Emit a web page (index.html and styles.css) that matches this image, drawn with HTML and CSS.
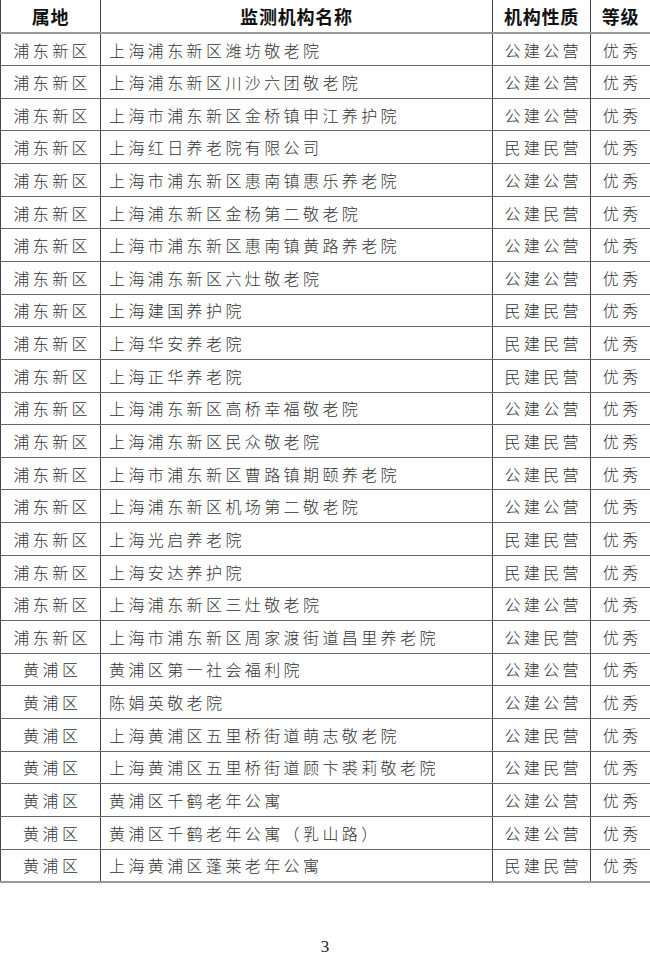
FILE: index.html
```html
<!DOCTYPE html>
<html lang="zh-CN">
<head>
<meta charset="utf-8">
<title>监测机构</title>
<link rel="stylesheet" href="styles.css">
</head>
<body>
<table class="list">
<colgroup><col class="c1"><col class="c2"><col class="c3"><col class="c4"></colgroup>
<thead>
<tr><th>属地</th><th>监测机构名称</th><th>机构性质</th><th>等级</th></tr>
</thead>
<tbody>
<tr><td class="ctr">浦东新区</td><td class="name">上海浦东新区潍坊敬老院</td><td class="ctr">公建公营</td><td class="ctr">优秀</td></tr>
<tr><td class="ctr">浦东新区</td><td class="name">上海浦东新区川沙六团敬老院</td><td class="ctr">公建公营</td><td class="ctr">优秀</td></tr>
<tr><td class="ctr">浦东新区</td><td class="name">上海市浦东新区金桥镇申江养护院</td><td class="ctr">公建公营</td><td class="ctr">优秀</td></tr>
<tr><td class="ctr">浦东新区</td><td class="name">上海红日养老院有限公司</td><td class="ctr">民建民营</td><td class="ctr">优秀</td></tr>
<tr><td class="ctr">浦东新区</td><td class="name">上海市浦东新区惠南镇惠乐养老院</td><td class="ctr">公建公营</td><td class="ctr">优秀</td></tr>
<tr><td class="ctr">浦东新区</td><td class="name">上海浦东新区金杨第二敬老院</td><td class="ctr">公建民营</td><td class="ctr">优秀</td></tr>
<tr><td class="ctr">浦东新区</td><td class="name">上海市浦东新区惠南镇黄路养老院</td><td class="ctr">公建公营</td><td class="ctr">优秀</td></tr>
<tr><td class="ctr">浦东新区</td><td class="name">上海浦东新区六灶敬老院</td><td class="ctr">公建公营</td><td class="ctr">优秀</td></tr>
<tr><td class="ctr">浦东新区</td><td class="name">上海建国养护院</td><td class="ctr">民建民营</td><td class="ctr">优秀</td></tr>
<tr><td class="ctr">浦东新区</td><td class="name">上海华安养老院</td><td class="ctr">民建民营</td><td class="ctr">优秀</td></tr>
<tr><td class="ctr">浦东新区</td><td class="name">上海正华养老院</td><td class="ctr">民建民营</td><td class="ctr">优秀</td></tr>
<tr><td class="ctr">浦东新区</td><td class="name">上海浦东新区高桥幸福敬老院</td><td class="ctr">公建公营</td><td class="ctr">优秀</td></tr>
<tr><td class="ctr">浦东新区</td><td class="name">上海浦东新区民众敬老院</td><td class="ctr">民建民营</td><td class="ctr">优秀</td></tr>
<tr><td class="ctr">浦东新区</td><td class="name">上海市浦东新区曹路镇期颐养老院</td><td class="ctr">公建民营</td><td class="ctr">优秀</td></tr>
<tr><td class="ctr">浦东新区</td><td class="name">上海浦东新区机场第二敬老院</td><td class="ctr">公建公营</td><td class="ctr">优秀</td></tr>
<tr><td class="ctr">浦东新区</td><td class="name">上海光启养老院</td><td class="ctr">民建民营</td><td class="ctr">优秀</td></tr>
<tr><td class="ctr">浦东新区</td><td class="name">上海安达养护院</td><td class="ctr">民建民营</td><td class="ctr">优秀</td></tr>
<tr><td class="ctr">浦东新区</td><td class="name">上海浦东新区三灶敬老院</td><td class="ctr">公建公营</td><td class="ctr">优秀</td></tr>
<tr><td class="ctr">浦东新区</td><td class="name">上海市浦东新区周家渡街道昌里养老院</td><td class="ctr">公建民营</td><td class="ctr">优秀</td></tr>
<tr><td class="ctr">黄浦区</td><td class="name">黄浦区第一社会福利院</td><td class="ctr">公建公营</td><td class="ctr">优秀</td></tr>
<tr><td class="ctr">黄浦区</td><td class="name">陈娟英敬老院</td><td class="ctr">公建公营</td><td class="ctr">优秀</td></tr>
<tr><td class="ctr">黄浦区</td><td class="name">上海黄浦区五里桥街道萌志敬老院</td><td class="ctr">公建民营</td><td class="ctr">优秀</td></tr>
<tr><td class="ctr">黄浦区</td><td class="name">上海黄浦区五里桥街道顾卞裘莉敬老院</td><td class="ctr">公建民营</td><td class="ctr">优秀</td></tr>
<tr><td class="ctr">黄浦区</td><td class="name">黄浦区千鹤老年公寓</td><td class="ctr">公建公营</td><td class="ctr">优秀</td></tr>
<tr><td class="ctr">黄浦区</td><td class="name">黄浦区千鹤老年公寓（乳山路）</td><td class="ctr">公建公营</td><td class="ctr">优秀</td></tr>
<tr><td class="ctr">黄浦区</td><td class="name">上海黄浦区蓬莱老年公寓</td><td class="ctr">民建民营</td><td class="ctr">优秀</td></tr>
</tbody>
</table>
<footer class="page-num">3</footer>
</body>
</html>
```

FILE: styles.css
```css
html, body {
  margin: 0;
  padding: 0;
  background: #ffffff;
}

body {
  width: 650px;
  font-family: "Noto Sans CJK SC", "Noto Sans", sans-serif;
  color: #222222;
}

.list {
  width: 650px;
  border-collapse: collapse;
  table-layout: fixed;
  border-left: 1px solid #444;
  border-right: 1px solid #444;
}

.c1 { width: 100px; }
.c2 { width: 392px; }
.c3 { width: 98px; }
.c4 { width: 60px; }

.list th,
.list td {
  border-left: 1px solid #444;
  border-right: 1px solid #444;
  border-bottom: 1px solid #666;
  padding: 0;
  overflow: hidden;
  white-space: nowrap;
}

.list th {
  height: 32px;
  font-size: 18px;
  font-weight: 700;
  letter-spacing: 0.8px;
  color: #111;
  text-align: center;
  line-height: 1;
  border-bottom: 2px solid #999;
}

.list tbody tr {
  height: 32.65px;
}

.list td {
  font-size: 16px;
  font-weight: 300;
  line-height: 1;
  letter-spacing: 3.4px;
  color: #333;
}

.list td.ctr {
  text-align: center;
  padding-left: 3.4px;
}

.list td.name {
  text-align: left;
  padding-left: 8px;
}

.list tbody tr:last-child td {
  border-bottom: 2px solid #999;
}

.page-num {
  margin-top: 54px;
  text-align: center;
  font-family: "Liberation Serif", "DejaVu Serif", serif;
  font-size: 17px;
  color: #222;
}
```
